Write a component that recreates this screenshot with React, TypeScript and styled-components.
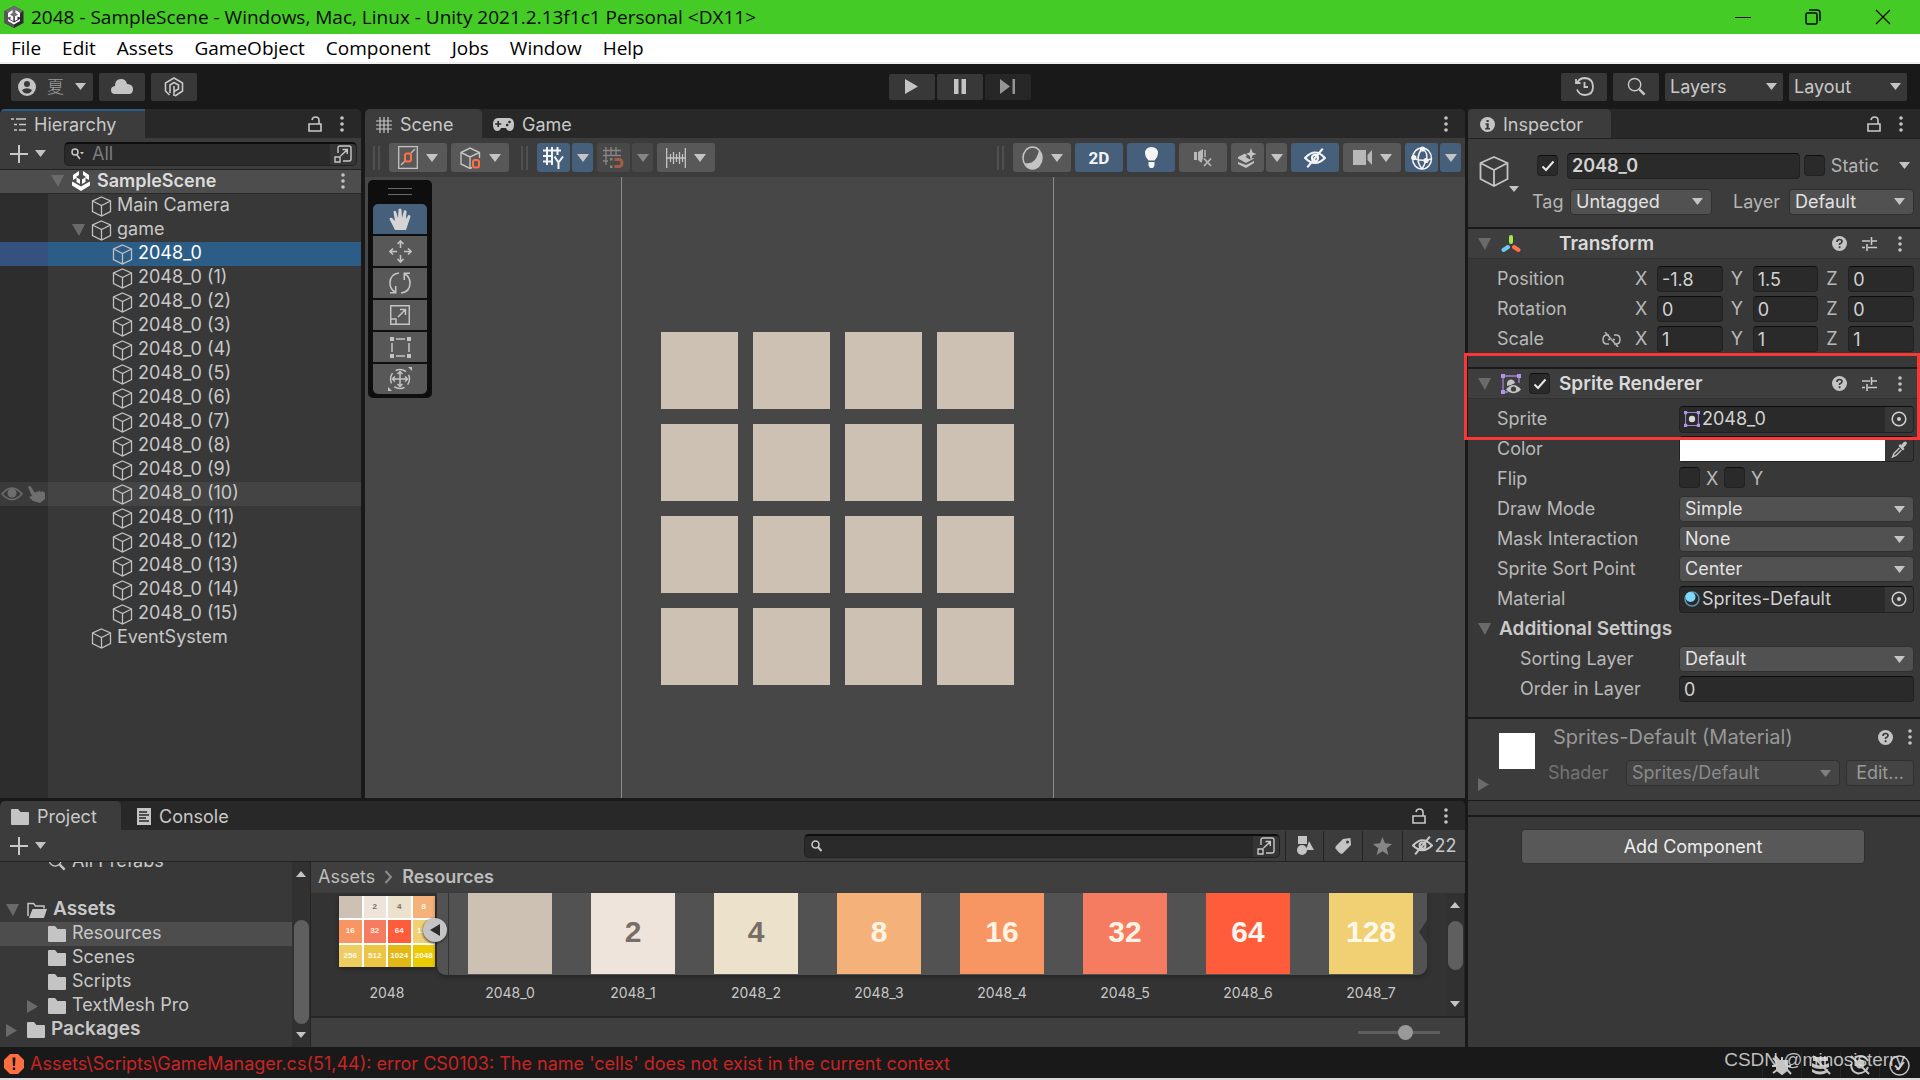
import React from "react";
import styled, { createGlobalStyle, css } from "styled-components";

const c = {
  void: "#191919",
  tabs: "#282828",
  bar: "#3c3c3c",
  panel: "#383838",
  field: "#2a2a2a",
  edge: "#212121",
  text: "#c8c8c8",
  blue: "#46607c",
  select: "#2c5d87",
  orange: "#ff7043",
};

const Global = createGlobalStyle`
  *, *::before, *::after { box-sizing: border-box; }
  body { margin: 0; background: ${c.void}; overflow: hidden; }
  button, input, select {
    font: inherit; color: inherit; margin: 0; padding: 0; border: 0;
    background: none; border-radius: 0; appearance: none; outline: 0;
  }
  svg { display: block; flex: none; }
  ul, h1, h2, p, figure { margin: 0; padding: 0; list-style: none; font: inherit; }
`;

/* ---------- shell ---------- */

const Shell = styled.div`
  display: flex;
  flex-direction: column;
  height: 100vh;
  color: ${c.text};
  font: 18px/24px Inter, "Noto Sans CJK SC", sans-serif;
  background: ${c.void};
  border-bottom: 2px solid #dcdcdc;
`;

const TitleBar = styled.header`
  display: flex;
  align-items: center;
  height: 34px;
  padding: 0 2px 0 4px;
  background: #45cb26;
  color: #0a0a0a;
  font: 19px/28px "Open Sans", "Noto Sans", sans-serif;
`;

const Title = styled.h1`
  flex: 1;
  padding-left: 7px;
`;

const WindowButton = styled.button`
  display: grid;
  place-items: center;
  width: 70px;
  height: 34px;
`;

const MenuBar = styled.nav`
  display: flex;
  gap: 21px;
  height: 30px;
  padding-left: 11px;
  background: #fff;
  border-bottom: 2px solid #f0f0f0;
  color: #000;
  font: 19px/28px "Open Sans", "Noto Sans", sans-serif;
`;

const Toolbar = styled.div`
  display: grid;
  grid-template-columns: 1fr auto 1fr;
  align-items: center;
  height: 45px;
  padding: 0 13px 0 11px;
`;

const Group = styled.div<{ $gap?: number; $end?: boolean }>`
  display: flex;
  gap: ${(p) => p.$gap ?? 6}px;
  justify-content: ${(p) => (p.$end ? "flex-end" : "flex-start")};
`;

const MainButton = styled.button<{ $w: number; $off?: boolean }>`
  display: flex;
  align-items: center;
  justify-content: center;
  gap: 11px;
  width: ${(p) => p.$w}px;
  height: 28px;
  border-radius: 2px;
  background: ${(p) => (p.$off ? "#272727" : c.panel)};
`;

const UserName = styled.span`
  color: #9c9c9c;
  font-size: 17px;
  font-weight: 300;
`;

const PlayGroup = styled(Group)`
  padding-left: 1px;
  button { height: 26px; }
`;

const Body = styled.main`
  flex: 1;
  min-height: 0;
  display: grid;
  grid-template-columns: minmax(0, 1fr) 452px;
  column-gap: 3px;
`;

const LeftSide = styled.div`
  display: flex;
  flex-direction: column;
  gap: 3px;
  min-height: 0;
`;

const Upper = styled.div`
  flex: 1;
  min-height: 0;
  display: grid;
  grid-template-columns: 361px minmax(0, 1fr);
  column-gap: 4px;
`;

const Panel = styled.section`
  display: flex;
  flex-direction: column;
  min-height: 0;
  min-width: 0;
  background: ${c.panel};
  border-radius: 5px 5px 0 0;
  overflow: hidden;
`;

const Tabs = styled.div`
  display: flex;
  align-items: center;
  flex: none;
  height: 29px;
  background: ${c.tabs};
`;

const Tab = styled.button<{ $on?: boolean; $focus?: boolean; $w: number }>`
  display: flex;
  align-items: center;
  gap: 8px;
  width: ${(p) => p.$w}px;
  height: 29px;
  padding: 2px 0 0 11px;
  background: ${(p) => (p.$on ? c.bar : "transparent")};
  border-radius: ${(p) => (p.$focus ? 0 : "5px 5px 0 0")};
  box-shadow: ${(p) => (p.$focus ? `inset 0 2px ${c.select}` : "none")};
`;

const TabEnd = styled.div`
  display: flex;
  align-items: center;
  gap: 18px;
  margin-left: auto;
  padding-right: 17px;
`;

const Plain = styled.button`
  display: grid;
  place-items: center;
`;

/* ---------- hierarchy ---------- */

const ListBar = styled.div<{ $right?: number }>`
  display: flex;
  align-items: center;
  flex: none;
  height: 32px;
  padding: 0 ${(p) => p.$right ?? 0}px 0 10px;
  background: ${c.bar};
  border-bottom: 1px solid #232323;
`;

const AddButton = styled.button`
  display: flex;
  align-items: center;
  gap: 7px;
`;

const Search = styled.label<{ $w?: number }>`
  display: flex;
  align-items: center;
  flex: ${(p) => (p.$w ? `0 0 ${p.$w}px` : "1")};
  gap: 8px;
  height: 24px;
  margin-left: ${(p) => (p.$w ? "auto" : "18px")};
  padding-left: 6px;
  background: ${c.field};
  border: 1px solid ${c.edge};
  border-top: 2px solid #0d0d0d;
  border-radius: 5px;
  overflow: hidden;
  input { flex: 1; min-width: 0; height: 20px; }
  input::placeholder { color: #7c7c7c; opacity: 1; }
`;

const SearchOpen = styled.span`
  display: grid;
  place-items: center;
  width: 26px;
  height: 22px;
  background: #353535;
`;

const SceneRow = styled.div`
  display: flex;
  align-items: center;
  flex: none;
  height: 24px;
  padding: 0 16px 2px 51px;
  background: #4d4d4d;
  border-bottom: 1px solid #2a2a2a;
  color: #dcdcdc;
  font-weight: 600;
  svg + svg { margin-left: 7px; }
  span { flex: 1; padding-left: 6px; }
`;

const Objects = styled.ul`
  flex: 1;
  background: linear-gradient(90deg, #2d2d2d 48px, ${c.panel} 48px);
`;

const ObjectRow = styled.li<{ $on?: boolean; $hover?: boolean }>`
  display: flex;
  align-items: center;
  height: 24px;
  background: ${(p) => (p.$on ? `linear-gradient(90deg, #35517d 48px, ${c.select} 48px)` : p.$hover ? "linear-gradient(90deg, #3a3a3a 48px, #444 48px)" : "none")};
  color: ${(p) => (p.$on ? "#fff" : c.text)};
`;

const Gutter = styled.span`
  display: flex;
  align-items: center;
  gap: 5px;
  width: 48px;
  padding-left: 1px;
`;

const Fold = styled.span<{ $w: number }>`
  display: flex;
  justify-content: flex-end;
  width: ${(p) => p.$w}px;
  padding-right: 6px;
`;

const ObjectName = styled.span`
  padding: 0 0 2px 5px;
`;

/* ---------- scene ---------- */

const SceneBar = styled.div`
  display: flex;
  align-items: center;
  flex: none;
  height: 39px;
  padding: 0 4px 0 8px;
  background: ${c.bar};
  gap: 4px;
`;

const Grip = styled.span<{ $l?: number }>`
  width: 7px;
  height: 24px;
  margin-right: 5px;
  margin-left: ${(p) => p.$l ?? 0}px;
  border: solid #505050;
  border-width: 0 2px;
`;

const Split = styled.div`
  display: flex;
  gap: 2px;
`;

const Tool = styled.button<{ $w: number; $on?: boolean; $off?: boolean }>`
  display: flex;
  align-items: center;
  justify-content: center;
  gap: 8px;
  width: ${(p) => p.$w}px;
  height: 29px;
  border-radius: 3px;
  background: ${(p) => (p.$on ? c.blue : p.$off ? "#484848" : "#585858")};
  color: ${(p) => (p.$on ? "#f4f4f4" : "#c4c4c4")};
  font: 700 17px/24px Roboto, sans-serif;
  svg { opacity: ${(p) => (p.$off ? 0.5 : 1)}; }
`;

const Stretch = styled.span`
  flex: 1;
`;

const Viewport = styled.div`
  position: relative;
  flex: 1;
  padding-left: 256px;
  background: #474747;
`;

const CameraFrame = styled.div`
  display: flex;
  justify-content: center;
  width: 433px;
  height: 100%;
  padding-top: 155px;
  border: solid #8c8c8c;
  border-width: 0 1px;
`;

const Board = styled.div`
  display: grid;
  grid-template-columns: repeat(4, 77px);
  grid-auto-rows: 77px;
  gap: 15px;
  align-content: start;
`;

const Cell = styled.div`
  background: #cdc1b4;
`;

const Palette = styled.div`
  position: absolute;
  left: 3px;
  top: 3px;
  display: flex;
  flex-direction: column;
  gap: 2px;
  width: 64px;
  padding: 8px 5px 4px;
  background: #0e0e0e;
  border-radius: 5px;
  button { width: 54px; height: 30px; border-radius: 0; }
  button:first-of-type { border-radius: 5px 5px 0 0; }
  button:last-of-type { border-radius: 0 0 5px 5px; }
`;

const PaletteGrip = styled.span`
  align-self: center;
  width: 24px;
  height: 7px;
  margin-bottom: 7px;
  border: solid #6a6a6a;
  border-width: 1px 0;
`;

/* ---------- project ---------- */

const ProjectPanel = styled(Panel)`
  flex: none;
  height: 246px;
`;

const Filters = styled.div`
  display: flex;
  margin-left: 5px;
`;

const Filter = styled.button<{ $w: number }>`
  display: flex;
  align-items: center;
  justify-content: center;
  gap: 2px;
  width: ${(p) => p.$w}px;
  height: 30px;
  border-left: 1px solid #242424;
`;

const ProjectBody = styled.div`
  flex: 1;
  min-height: 0;
  display: grid;
  grid-template-columns: 292px 19px minmax(0, 1fr);
`;

const Tree = styled.ul`
  display: flex;
  flex-direction: column;
  justify-content: flex-end;
  overflow: hidden;
  padding-bottom: 5px;
`;

const TreeRow = styled.li<{ $on?: boolean; $bold?: boolean; $depth?: number }>`
  display: flex;
  align-items: center;
  flex: none;
  height: 24px;
  font-size: ${(p) => (p.$bold ? 19 : 18)}px;
  font-weight: ${(p) => (p.$bold ? 600 : 400)};
  background: ${(p) => (p.$on ? "#4d4d4d" : "none")};
  padding-left: ${(p) => (p.$depth ?? 0) * 21}px;
  span:last-child { padding: 0 0 2px 6px; }
`;

const TreeFold = styled.span`
  display: flex;
  width: 27px;
  padding-left: 6px;
`;

const Scroll = styled.div<{ $thumb: number; $lead: number }>`
  display: flex;
  flex-direction: column;
  align-items: center;
  width: 19px;
  padding: 9px 0;
  background: #313131;
  border-right: 1px solid #232323;
  i {
    width: 15px;
    height: ${(p) => p.$thumb}px;
    margin: ${(p) => p.$lead}px 0 auto;
    border-radius: 8px;
    background: #5f5f5f;
  }
`;

const Browser = styled.div`
  display: flex;
  flex-direction: column;
  min-width: 0;
`;

const Crumbs = styled.div`
  display: flex;
  align-items: center;
  gap: 9px;
  height: 31px;
  padding: 0 0 2px 7px;
  background: #3f3f3f;
  a { color: #bdbdbd; text-decoration: none; }
  a:last-child { font-weight: 600; }
`;

const AssetArea = styled.div`
  flex: 1;
  min-height: 0;
  display: flex;
  background: #333;
  border-bottom: 2px solid #262626;
`;

const Texture = styled.figure`
  width: 100px;
  margin-left: 26px;
  text-align: center;
`;

const Caption = styled.figcaption`
  padding-top: 6px;
  font-size: 14px;
  text-align: center;
`;

const TextureHolder = styled.div`
  position: relative;
  height: 82px;
  padding: 3px 2px 0;
`;

const Sheet = styled.div`
  display: grid;
  grid-template-columns: repeat(4, 1fr);
  grid-template-rows: repeat(3, 1fr);
  gap: 2px;
  height: 71px;
  background: #fff;
  box-shadow: 0 2px 4px #222;
`;

const SheetCell = styled.div<{ $bg: string; $fg: string }>`
  display: grid;
  place-items: center;
  background: ${(p) => p.$bg};
  color: ${(p) => p.$fg};
  font: 700 8px/8px "Liberation Sans", Arial, sans-serif;
`;

const Collapse = styled.button`
  position: absolute;
  right: -10px;
  top: 25px;
  z-index: 1;
  display: grid;
  place-items: center;
  width: 24px;
  height: 24px;
  border-radius: 12px;
  background: #c4c4c4;
  box-shadow: 0 1px 3px #222;
`;

const Sprites = styled.div`
  display: grid;
  grid-template-columns: repeat(8, 84px);
  column-gap: 39px;
  align-content: start;
`;

const Strip = styled(Sprites)`
  position: relative;
  padding: 0 14px 1px 31px;
  background: linear-gradient(90deg, #525252 11px, #333 11px, #333 12px, #525252 12px);
  border-radius: 0 0 9px 9px;
  box-shadow: 0 3px 4px #282828;
`;

const StripNotch = styled.svg`
  position: absolute;
  right: 0;
  top: 27px;
`;

const Captions = styled(Sprites)`
  padding-left: 31px;
`;

const SpriteTile = styled.div<{ $bg: string; $fg: string }>`
  display: grid;
  place-items: center;
  height: 81px;
  padding-bottom: 4px;
  background: ${(p) => p.$bg};
  color: ${(p) => p.$fg};
  font: 700 30px/30px "Liberation Sans", Arial, sans-serif;
`;

const ZoomBar = styled.div`
  display: flex;
  justify-content: flex-end;
  align-items: center;
  height: 29px;
  padding-right: 25px;
  background: #3f3f3f;
`;

const ZoomSlider = styled.input`
  width: 82px;
  height: 16px;
  &::-webkit-slider-runnable-track { height: 3px; background: #5e5e5e; }
  &::-webkit-slider-thumb {
    appearance: none; width: 15px; height: 15px; margin-top: -6px;
    border-radius: 8px; background: #999;
  }
`;

/* ---------- inspector ---------- */

const Inspector = styled(Panel)`
  position: relative;
  overflow: visible;
`;

const ObjectHead = styled.div`
  display: grid;
  grid-template-columns: 53px minmax(0, 1fr);
  height: 89px;
  padding: 13px 6px 0 11px;
  background: ${c.bar};
  border-top: 1px solid ${c.edge};
`;

const CubeButton = styled.button`
  display: flex;
  align-items: flex-end;
  align-self: start;
  height: 40px;
`;

const HeadRows = styled.div`
  display: flex;
  flex-direction: column;
  gap: 9px;
`;

const HeadRow = styled.div`
  display: flex;
  align-items: center;
  height: 27px;
  color: #b4b4b4;
`;

const NameRow = styled(HeadRow)`
  padding: 0 4px 0 5px;
  > input { margin: 0 4px 0 9px; }
  label { padding: 0 20px 0 6px; }
`;

const Label = styled.label<{ $w: number }>`
  width: ${(p) => p.$w}px;
`;

const fieldBox = css`
  background: ${c.field};
  border: 1px solid ${c.edge};
  border-top-color: #0d0d0d;
  border-radius: 4px;
`;

const Field = styled.input<{ $bold?: boolean }>`
  ${fieldBox}
  flex: 1;
  width: 100%;
  min-width: 0;
  height: 26px;
  padding-left: 4px;
  color: #d2d2d2;
  font-weight: ${(p) => (p.$bold ? 600 : 400)};
`;

const CheckWrap = styled.span`
  display: grid;
  flex: none;
  width: 21px;
  height: 21px;
  > * { grid-area: 1 / 1; }
  input { ${fieldBox} width: 21px; height: 21px; }
  svg { place-self: center; pointer-events: none; opacity: 0; }
  input:checked + svg { opacity: 1; }
`;

const SelectWrap = styled.span<{ $w?: number; $kind?: "main" | "off" }>`
  display: grid;
  align-items: center;
  flex: ${(p) => (p.$w ? "none" : "1")};
  width: ${(p) => (p.$w ? `${p.$w}px` : "auto")};
  > * { grid-area: 1 / 1; }
  select {
    width: 100%;
    height: ${(p) => (p.$kind === "main" ? 28 : 26)}px;
    padding-left: 5px;
    background: ${(p) => (p.$kind === "main" ? c.panel : p.$kind === "off" ? "#444" : "#515151")};
    border: ${(p) => (p.$kind === "main" ? 0 : 1)}px solid #303030;
    border-radius: ${(p) => (p.$kind === "main" ? 2 : 4)}px;
    color: ${(p) => (p.$kind === "off" ? "#8a8a8a" : p.$kind === "main" ? c.text : "#e2e2e2")};
    opacity: 1;
  }
  svg { justify-self: end; margin-right: ${(p) => (p.$kind === "main" ? 6 : 9)}px; pointer-events: none; }
`;

const CompHead = styled.div`
  display: flex;
  align-items: center;
  height: 32px;
  padding: 0 18px 0 10px;
  background: #3e3e3e;
  border-top: 2px solid #1a1a1a;
  border-bottom: 1px solid #303030;
`;

const CompIcons = styled.span`
  display: flex;
  align-items: center;
  width: 68px;
  padding-left: 10px;
  gap: 8px;
`;

const CompTitle = styled.h2`
  flex: 1;
  color: #dadada;
  font-size: 19px;
  font-weight: 600;
`;

const CompActions = styled.span`
  display: flex;
  align-items: center;
  gap: 15px;
  button:last-child { margin-left: 6px; }
`;

const Props = styled.div`
  display: flex;
  flex-direction: column;
  padding: 5px 6px 13px 29px;
`;

const PropRow = styled.div<{ $indent?: boolean }>`
  display: grid;
  grid-template-columns: 182px minmax(0, 1fr);
  align-items: center;
  height: 30px;
  color: #b8b8b8;
  > :first-child { padding-left: ${(p) => (p.$indent ? 23 : 0)}px; }
`;

const VectorRow = styled.div`
  display: grid;
  grid-template-columns: 97px 25px repeat(3, minmax(0, 1fr));
  column-gap: 8px;
  align-items: center;
  height: 30px;
  color: #b8b8b8;
`;

const Axis = styled.label`
  display: grid;
  grid-template-columns: 22px minmax(0, 1fr);
  align-items: center;
`;

const ObjectField = styled.button`
  ${fieldBox}
  display: flex;
  align-items: center;
  gap: 2px;
  height: 27px;
  padding-left: 4px;
  color: #d2d2d2;
  overflow: hidden;
`;

const Picker = styled.span`
  display: grid;
  place-items: center;
  width: 28px;
  height: 25px;
  margin-left: auto;
  background: #373737;
`;

const ColorField = styled.div`
  ${fieldBox}
  display: flex;
  height: 26px;
  background: #373737;
  input { flex: 1; height: 24px; background: #fff; }
  input::-webkit-color-swatch-wrapper { padding: 0; }
  input::-webkit-color-swatch { border: 0; border-radius: 0; }
  button { width: 28px; }
`;

const Flip = styled.div`
  display: flex;
  gap: 6px;
  label { width: 12px; }
`;

const FoldRow = styled.div`
  display: flex;
  align-items: center;
  gap: 8px;
  height: 30px;
  margin-left: -19px;
  color: #cacaca;
  font-size: 19px;
  font-weight: 600;
`;

const MaterialBox = styled.div`
  display: grid;
  grid-template-columns: 70px minmax(0, 1fr);
  height: 84px;
  padding: 6px 6px 0 10px;
  background: #3c3c3c;
  border-top: 2px solid #1a1a1a;
  border-bottom: 1px solid #1a1a1a;
`;

const MaterialPreview = styled.div`
  display: flex;
  flex-direction: column;
  padding-top: 8px;
  gap: 9px;
  i { width: 36px; height: 36px; margin-left: 21px; background: #fff; }
`;

const MaterialRow = styled.div`
  display: flex;
  align-items: center;
  height: 24px;
  margin-bottom: 12px;
  color: #747474;
`;

const MaterialTitle = styled.h2`
  flex: 1;
  padding-left: 5px;
  color: #989898;
  font-size: 20px;
`;

const MaterialActions = styled.div`
  display: flex;
  gap: 15px;
  padding-right: 2px;
  color: ${c.text};
`;

const EditButton = styled.button`
  width: 68px;
  height: 26px;
  margin-left: 6px;
  background: #444;
  border: 1px solid #303030;
  border-radius: 4px;
  color: #999;
`;

const AddArea = styled.div`
  display: flex;
  justify-content: center;
  margin-top: 14px;
  padding: 12px 2px 12px 0;
  border-top: 2px solid #1a1a1a;
`;

const AddComponent = styled.button`
  width: 344px;
  height: 35px;
  background: #585858;
  border: 1px solid #303030;
  border-radius: 4px;
  color: #eee;
`;

const Callout = styled.div`
  position: absolute;
  left: -4px;
  right: 0;
  top: 244px;
  height: 87px;
  border: 3px solid #fa3737;
  pointer-events: none;
`;

/* ---------- status ---------- */

const Status = styled.footer`
  position: relative;
  display: flex;
  align-items: center;
  gap: 6px;
  height: 31px;
  padding: 2px 2px 0 4px;
  color: #c92424;
`;

const StatusIcons = styled.div`
  display: flex;
  margin-left: auto;
  padding-top: 3px;
  button { display: grid; place-items: center; width: 39px; height: 26px; border-left: 1px solid #262626; }
`;

const Watermark = styled.span`
  position: absolute;
  right: 15px;
  top: 1px;
  color: rgba(222, 222, 222, 0.85);
  font: 19px/24px "Liberation Sans", Arial, sans-serif;
`;

/* ---------- icons ---------- */

const S = ({ s = 20, h, vb, children, ...r }: any) => (
  <svg width={s} height={h ?? s} viewBox={vb ?? `0 0 ${s} ${h ?? s}`} fill="none" stroke="currentColor" strokeWidth={1.5} aria-hidden {...r}>
    {children}
  </svg>
);

const Tri = ({ d = "down", w = 11, fill = "#c4c4c4" }: { d?: string; w?: number; fill?: string }) => {
  const h = Math.ceil(w * 0.6);
  if (d === "down") return <svg width={w} height={h} viewBox="0 0 10 6" preserveAspectRatio="none"><path d="M0 0H10L5 6Z" fill={fill} /></svg>;
  if (d === "up") return <svg width={w} height={h} viewBox="0 0 10 6" preserveAspectRatio="none"><path d="M0 6H10L5 0Z" fill={fill} /></svg>;
  return <svg width={w} height={13} viewBox="0 0 10 12" preserveAspectRatio="none"><path d="M0 0V12L10 6Z" fill={fill} /></svg>;
};

const FoldDown = () => <svg width="13" height="12" viewBox="0 0 13 12"><path d="M0 0H13L7 12Z" fill="#6a6a6a" /></svg>;

const Cube = ({ s = 21 }: { s?: number }) => (
  <S s={s} vb="0 0 21 21" strokeWidth={1.3} stroke="#c0c0c0">
    <path d="M10.5 1L19.5 5V15.5L10.5 20L1.5 15.5V5Z M1.5 5L10.5 9.5L19.5 5 M10.5 9.5V20" />
  </S>
);

const Dots = () => <S s={4} h={16} stroke="none" fill="#c4c4c4"><circle cx="2" cy="2" r="1.8" /><circle cx="2" cy="8" r="1.8" /><circle cx="2" cy="14" r="1.8" /></S>;

const Lock = () => <S s={14} h={16} strokeWidth={1.6}><path d="M1 8H13V15H1Z M11 8V4.5Q11 1 7.5 1Q4.5 1 4 4" /></S>;

const UnityMark = () => (
  <S s={20} stroke="none" fill="#fff">
    <path d="M8 0V4L5 6L9 8.500V13L5.500 11V7L2 9V4Z M12 0V4L15 6L11 8.500V13L14.500 11V7L18 9V4Z M1 10.500L4 12L10 15.500L16 12L19 10.500V14.500L10 20L1 14.500Z" />
  </S>
);

const AppLogo = () => (
  <S s={20} h={22} stroke="none">
    <path d="M10 0L19.500 5V17L10 22L0.500 17V5Z" fill="#2a2a30" />
    <path d="M10 0L19.500 5L10 11L0.500 5Z" fill="#6d6d72" />
    <path d="M0.500 5L10 11V22L0.500 17Z" fill="#55555a" />
    <path d="M8.500 4V7L6 8.500L9.200 10.500V15L6.500 13.500V10.500L4 11.500V7Z M11.500 4V7L14 8.500L10.800 10.500V15L13.500 13.500V10.500L16 11.500V7Z M4 13L10 16.500L16 13V15L10 18.500L4 15Z" fill="#fff" />
  </S>
);

const Folder = () => <S s={18} h={16} stroke="none" fill="#c4c4c4"><path d="M0 1Q0 0 1 0H7L9.500 3H17Q18 3 18 4V15Q18 16 17 16H1Q0 16 0 15Z" /></S>;

const FolderOpen = () => <S s={20} h={16} stroke="none" fill="#c4c4c4"><path d="M5.500 7H20L17 16H2Z" /><path d="M1 14V1.500H6.500L8.500 4H17V6.500" fill="none" stroke="#c4c4c4" strokeWidth="1.500" /></S>;

const Magnifier = ({ s = 20 }: { s?: number }) => <S s={s} vb="0 0 20 20"><circle cx="8" cy="8" r="6.500" /><path d="M13 13L18.500 18.500" strokeWidth="2.600" /></S>;

const Plus = () => <S s={18} strokeWidth={2}><path d="M9 0V18M0 9H18" /></S>;

const OpenIn = () => <S s={18} strokeWidth={1.4}><path d="M4 8V3Q4 1 6 1H15Q17 1 17 3V14Q17 16 15 16H9 M1 12H6V17H1Z M6.500 11L13 5 M8.500 4.500H13.300V9" /></S>;

const Grid = ({ s = 16 }: { s?: number }) => <S s={s} vb="0 0 16 16"><path d="M4 0V16M8 0V16M12 0V16M0 4H16M0 8H16M0 12H16" strokeWidth="1.200" /></S>;

const Help = () => <S s={15} stroke="none"><circle cx="7.500" cy="7.500" r="7.500" fill="#c4c4c4" /><path d="M5 6Q5 3.500 7.500 3.500Q10 3.500 10 5.500Q10 7 7.600 8V9" fill="none" stroke="#383838" strokeWidth="1.700" /><path d="M6.700 10.300H8.500V12.200H6.700Z" fill="#383838" /></S>;

const Sliders = () => <S s={15} h={14} strokeWidth={1.6}><path d="M0 4H8M10 4H15M9.500 0V8M0 10.500H3M6 10.500H15M5 7V14" /></S>;

const EyeOff = ({ s = 20 }: { s?: number }) => <S s={s} vb="0 0 20 20" strokeWidth={2}><path d="M1 10Q10 0 19 10Q10 19 1 10Z" /><circle cx="10" cy="10" r="2.800" /><path d="M3 18.500L17 1.500" /></S>;

const Target = () => <S s={16} strokeWidth={1.5}><circle cx="8" cy="8" r="6.800" /><circle cx="8" cy="8" r="2" fill="currentColor" stroke="none" /></S>;

const SpriteIcon = ({ s = 16, eye }: { s?: number; eye?: boolean }) => (
  <S s={s} vb="0 0 20 20" stroke="#a184d8" strokeWidth={1.3}>
    <path d={eye ? "M18 9V2H2V18H7" : "M2 2H18V18H2Z"} />
    <path d="M0 0H4V4H0ZM16 0H20V4H16ZM0 16H4V20H0Z" fill="#b195e6" stroke="none" />
    {eye ? (
      <g stroke="none" fill="#c4c4c4">
        <path d="M6 12V9Q7 5.500 10 5.500Q13 5.500 14 9L10 11Z" />
        <path d="M5 15.500Q12.500 6.500 20 15.500Q12.500 23 5 15.500Z" />
        <circle cx="12.500" cy="15" r="2.600" fill="#3e3e3e" />
      </g>
    ) : (
      <g stroke="none"><path d="M16 16H20V20H16Z" fill="#b195e6" /><circle cx="10" cy="10" r="4" fill="#d8d8d8" /></g>
    )}
  </S>
);

const CheckMark = () => <S s={14} h={12} stroke="#e8e8e8" strokeWidth={2}><path d="M1.500 6.500L5 10L12.500 1.500" /></S>;

/* ---------- small parts ---------- */

const Check = ({ id, on, label }: { id: string; on?: boolean; label?: string }) => (
  <CheckWrap>
    <input id={id} type="checkbox" defaultChecked={on} aria-label={label} />
    <CheckMark />
  </CheckWrap>
);

const Select = ({ id, value, w, kind, label }: { id: string; value: string; w?: number; kind?: "main" | "off"; label?: string }) => (
  <SelectWrap $w={w} $kind={kind}>
    <select id={id} defaultValue={value} aria-label={label} disabled={kind === "off"}><option>{value}</option></select>
    <Tri fill={kind === "off" ? "#808080" : "#c4c4c4"} />
  </SelectWrap>
);

const ScrollBar = ({ thumb, lead }: { thumb: number; lead: number }) => (
  <Scroll $thumb={thumb} $lead={lead}><Tri d="up" w={10} /><i /><Tri w={10} /></Scroll>
);

const tiles = [
  { n: "", bg: "#cdc1b4", fg: "#776e65" },
  { n: "2", bg: "#eee4dc", fg: "#776e65" },
  { n: "4", bg: "#ece1ca", fg: "#776e65" },
  { n: "8", bg: "#f4b27a", fg: "#fff3e4" },
  { n: "16", bg: "#f89663", fg: "#fff3e4" },
  { n: "32", bg: "#f57c60", fg: "#fff3e4" },
  { n: "64", bg: "#ff5c3c", fg: "#fff6ee" },
  { n: "128", bg: "#f0d072", fg: "#fff9ec" },
  { n: "256", bg: "#edcc61", fg: "#fff9ec" },
  { n: "512", bg: "#edc545", fg: "#fff9ec" },
  { n: "1024", bg: "#e2b914", fg: "#fff9ec" },
  { n: "2048", bg: "#ecca02", fg: "#fff9ec" },
];

const children = Array.from({ length: 16 }, (_, i) => (i ? `2048_0 (${i})` : "2048_0"));

const vectors: [string, string[]][] = [
  ["Position", ["-1.8", "1.5", "0"]],
  ["Rotation", ["0", "0", "0"]],
  ["Scale", ["1", "1", "1"]],
];

const Actions = () => (
  <CompActions>
    <Plain aria-label="Help"><Help /></Plain>
    <Plain aria-label="Presets"><Sliders /></Plain>
    <Plain aria-label="More"><Dots /></Plain>
  </CompActions>
);

/* ---------- panels ---------- */

function HierarchyPanel() {
  return (
    <Panel>
      <Tabs>
        <Tab $on $focus $w={145}>
          <S s={15} h={16} strokeWidth={1.6}><path d="M0 2H3M5 2H15M3 7.500H6M8 7.500H15M3 13H6M8 13H15" /></S>
          Hierarchy
        </Tab>
        <TabEnd><Plain aria-label="Lock"><Lock /></Plain><Plain aria-label="More"><Dots /></Plain></TabEnd>
      </Tabs>
      <ListBar $right={4}>
        <AddButton aria-label="Create"><Plus /><Tri /></AddButton>
        <Search>
          <S s={13} h={14} strokeWidth={1.5}><circle cx="4" cy="5" r="3" /><path d="M6 8L9 12" /><path d="M9 5H13L11 7.500Z" fill="currentColor" stroke="none" /></S>
          <input aria-label="Search hierarchy" placeholder="All" />
          <SearchOpen><OpenIn /></SearchOpen>
        </Search>
      </ListBar>
      <SceneRow><FoldDown /><UnityMark /><span>SampleScene</span><Dots /></SceneRow>
      <Objects>
        <ObjectRow><Gutter /><Fold $w={43} /><Cube /><ObjectName>Main Camera</ObjectName></ObjectRow>
        <ObjectRow><Gutter /><Fold $w={43}><FoldDown /></Fold><Cube /><ObjectName>game</ObjectName></ObjectRow>
        {children.map((name, i) => (
          <ObjectRow key={name} $on={i === 0} $hover={i === 10}>
            <Gutter>
              {i === 10 && (
                <>
                  <S s={22} h={14} stroke="#6e6e6e"><path d="M1 7Q11 -5 21 7Q11 18 1 7Z" /><circle cx="11" cy="6" r="4.500" fill="#6e6e6e" stroke="none" /></S>
                  <S s={17} h={17} stroke="none" fill="#6e6e6e"><path d="M0 1Q2 -1 3.500 1.500L7 7L8 5.500L10 6L11 4.500L13 6L14.500 5L17 7V13L12 17L5 15L1 11L4 10Z" /></S>
                </>
              )}
            </Gutter>
            <Fold $w={64} /><Cube /><ObjectName>{name}</ObjectName>
          </ObjectRow>
        ))}
        <ObjectRow><Gutter /><Fold $w={43} /><Cube /><ObjectName>EventSystem</ObjectName></ObjectRow>
      </Objects>
    </Panel>
  );
}

function ScenePanel() {
  return (
    <Panel>
      <Tabs>
        <Tab $on $w={117}><Grid />Scene</Tab>
        <Tab $w={110}>
          <S s={21} h={13} stroke="none" fill="#c4c4c4">
            <path d="M5 0H16Q21 0 21 6.500Q21 13 17 13Q14 13 13 10H8Q7 13 4 13Q0 13 0 6.500Q0 0 5 0Z" />
            <path d="M5.200 3V9M2.200 6H8.200" stroke="#282828" strokeWidth="1.600" /><circle cx="16.500" cy="4" r="1.300" fill="#282828" /><circle cx="14.200" cy="7" r="1.300" fill="#282828" />
          </S>
          Game
        </Tab>
        <TabEnd><Plain aria-label="More"><Dots /></Plain></TabEnd>
      </Tabs>
      <SceneBar>
        <Grip />
        <Tool $w={58} aria-label="Pivot">
          <S s={20} h={23}><path d="M0.700 0.700H19.300V22.300H0.700Z" strokeWidth="1.300" /><path d="M3 19L7 15M13 7L17 3" strokeWidth="1.300" /><rect x="7" y="7.500" width="6" height="8" rx="2" stroke={c.orange} strokeWidth="2" /></S><Tri w={12} />
        </Tool>
        <Tool $w={58} aria-label="Orientation">
          <S s={21} h={22} strokeWidth={1.4}><path d="M12 20.500L10 21.500L1 17V5.500L10 1L19.500 5.500V11M1 5.500L10 10L19.500 5.500M10 10V21" /><rect x="13" y="13" width="6" height="7.500" rx="2" stroke={c.orange} strokeWidth="2" /></S><Tri w={12} />
        </Tool>
        <Grip $l={8} />
        <Split>
          <Tool $w={33} $on aria-label="Grid">
            <S s={21} h={22} strokeWidth={2}><path d="M4 0V18M9 0V18M14.500 0V8M0 3.500H18M0 9H10M0 14.500H9M11.500 9.500L15.500 15.500L20 9.500M15.500 15V22" /></S>
          </Tool>
          <Tool $w={21} $on aria-label="Grid options"><Tri w={12} /></Tool>
        </Split>
        <Split>
          <Tool $w={33} $off aria-label="Snap">
            <S s={21} h={22}><path d="M3 0V18M8 0V9M13 0V9M0 3.500H18M0 8.500H18M0 14H5" strokeWidth="1.300" /><path d="M7 11H9.500V13.500H7ZM7 18.500H9.500V21H7Z" fill="currentColor" stroke="none" /><path d="M11.500 12.500H15.500Q19 12.500 19 16Q19 19.500 15.500 19.500H11.500" stroke={c.orange} strokeWidth="3" /></S>
          </Tool>
          <Tool $w={21} $off aria-label="Snap options"><Tri w={12} /></Tool>
        </Split>
        <Tool $w={58} aria-label="Increment">
          <S s={20} strokeWidth={1.3}><path d="M0.700 0V20M19.300 0V20M0 10H20M4.500 6V14M7.500 4V16M10.500 6V14M13.500 4V16M16.500 6V14" /></S><Tri w={12} />
        </Tool>
        <Stretch />
        <Grip />
        <Tool $w={58} aria-label="Shading">
          <S s={21} h={24}><ellipse cx="10.500" cy="12" rx="9.500" ry="11" strokeWidth="1.500" /><path d="M3 17Q14 19 17 4Q21 9 19.500 15Q17 23 10.500 23Q5 22.500 3 17Z" fill="currentColor" stroke="none" /></S><Tri w={12} />
        </Tool>
        <Tool $w={48} $on>2D</Tool>
        <Tool $w={48} $on aria-label="Lighting"><S s={13} h={21} stroke="none" fill="#f4f4f4"><path d="M3.500 13.500Q0 10 0 6.500Q0 0 6.500 0Q13 0 13 6.500Q13 10 9.500 13.500ZM3.500 15H9.500V18.500L8 21H5L3.500 18.500Z" /></S></Tool>
        <Tool $w={48} aria-label="Audio"><S s={18} h={18} stroke="none" fill="#b8b8b8"><path d="M0 3H3V11H0ZM4 3L9 0V9L7.500 14L4 11Z" /><path d="M11 1V8" stroke="#b8b8b8" strokeWidth="1.500" /><path d="M10 9.500L17 17M17 9.500L10 17" stroke="#b8b8b8" strokeWidth="1.800" /></S></Tool>
        <Split>
          <Tool $w={33} aria-label="Effects"><S s={19} h={20} stroke="none" fill="currentColor"><path d="M0 9L7 5.500L9 8L7.500 9L12 11.500L15 10L16 10.500L8 15L0 10.500ZM0 14L8 17L16 13V15L8 20L0 16ZM13 0L14.500 4.500L18.500 6L14.500 7.500L13 12L11.500 7.500L8 6L11.500 4.500Z" /></S></Tool>
          <Tool $w={21} aria-label="Effects options"><Tri w={12} /></Tool>
        </Split>
        <Tool $w={48} $on aria-label="Visibility"><EyeOff s={22} /></Tool>
        <Tool $w={58} aria-label="Camera"><S s={19} h={15} stroke="none" fill="#b8b8b8"><path d="M0 0H13V15H0ZM14.500 5L19 0V15L14.500 10Z" /></S><Tri w={12} /></Tool>
        <Split>
          <Tool $w={33} $on aria-label="Gizmos">
            <S s={22} h={24}><ellipse cx="11" cy="12.500" rx="9.500" ry="10.500" /><path d="M11 2.500Q3 13 11 23M12 3Q18 8 15 14.500Q13 20 11 23M2 11.500Q8 16 20.500 13" /><circle cx="11.500" cy="3" r="2.600" fill="#f4f4f4" stroke="none" /><circle cx="2.800" cy="11.500" r="2.600" fill="#f4f4f4" stroke="none" /><circle cx="15" cy="14.500" r="2.600" fill="#f4f4f4" stroke="none" /></S>
          </Tool>
          <Tool $w={21} $on aria-label="Gizmo options"><Tri w={12} /></Tool>
        </Split>
      </SceneBar>
      <Viewport>
        <CameraFrame>
          <Board>{Array.from({ length: 16 }, (_, i) => <Cell key={i} />)}</Board>
        </CameraFrame>
        <Palette>
          <PaletteGrip />
          <Tool $w={54} $on aria-label="Hand"><S s={22} h={23} stroke="none" fill="#d4d4d4"><path d="M6 22L0.500 11Q1 9 3 10L6 13L4.500 4Q5 2 7 3.500L9 10L9.500 1.500Q11 -0.500 12.500 1.500L13 10L15 2.500Q17 1.500 17.500 3.500L17 11L19.500 7Q21.500 6.500 21.500 8.500L17 22Z" /></S></Tool>
          <Tool $w={54} aria-label="Move"><S s={23} strokeWidth={1.6}><path d="M11.500 8V1M8.500 4L11.500 1L14.500 4M11.500 15V22M8.500 19L11.500 22L14.500 19M8 11.500H1M4 8.500L1 11.500L4 14.500M15 11.500H22M19 8.500L22 11.500L19 14.500" /></S></Tool>
          <Tool $w={54} aria-label="Rotate"><S s={22} strokeWidth={1.6}><path d="M10 1Q1 2 1 11Q1 17 6 20M1 20.700H6.700V14M12 21Q21 20 21 11Q21 5 16 2M21 1.300H15.300V8" /></S></Tool>
          <Tool $w={54} aria-label="Scale"><S s={20}><path d="M0.700 0.700H19.300V19.300H0.700ZM0.700 14H6V19.300M8 12L15.500 4.500M10 4.500H15.500V10" /></S></Tool>
          <Tool $w={54} aria-label="Rect"><S s={21}><path d="M6 2H15M6 19H15M2 6V15M19 6V15" /><path d="M0 0H4V4H0ZM17 0H21V4H17ZM0 17H4V21H0ZM17 17H21V21H17Z" fill="currentColor" stroke="none" /></S></Tool>
          <Tool $w={54} aria-label="Transform"><S s={24}><circle cx="12" cy="12" r="9.500" strokeDasharray="11 4" strokeDashoffset="5" /><path d="M12 5V19M5 12H19M9.500 7L12 4.500L14.500 7M9.500 17L12 19.500L14.500 17M7 9.500L4.500 12L7 14.500M17 9.500L19.500 12L17 14.500" /><path d="M20 0H24V4ZM0 20V24H4Z" fill="currentColor" stroke="none" /></S></Tool>
        </Palette>
      </Viewport>
    </Panel>
  );
}

function Project() {
  return (
    <ProjectPanel>
      <Tabs>
        <Tab $on $w={121}><Folder />Project</Tab>
        <Tab $w={120}>
          <S s={19} h={17} stroke="none"><path d="M5 0H19V17H5Z" fill="#c4c4c4" /><path d="M7 4H15M7 7H17M7 10H14M7 13H17" stroke="#282828" strokeWidth="1.500" /></S>
          Console
        </Tab>
        <TabEnd><Plain aria-label="Lock"><Lock /></Plain><Plain aria-label="More"><Dots /></Plain></TabEnd>
      </Tabs>
      <ListBar>
        <AddButton aria-label="Create"><Plus /><Tri /></AddButton>
        <Search $w={476}>
          <S s={11} h={12} strokeWidth={1.6}><circle cx="4.500" cy="4.500" r="3.500" /><path d="M7 7L10.500 11" strokeWidth="2" /></S>
          <input aria-label="Search project" />
          <SearchOpen><OpenIn /></SearchOpen>
        </Search>
        <Filters>
          <Filter $w={38} aria-label="Search by type"><S s={18} h={19} stroke="none" fill="#c4c4c4"><path d="M2 0H11V8H2ZM13 5L18 14H10Z" /><circle cx="6" cy="14" r="5" /></S></Filter>
          <Filter $w={39} aria-label="Search by label"><S s={17} h={16} stroke="none"><path d="M8 1L15.500 0L16 7L7 16Q5 16 0.500 10.500Q0 9 1 8Z" fill="#c4c4c4" /><circle cx="12.500" cy="4" r="1.500" fill="#3c3c3c" /></S></Filter>
          <Filter $w={40} aria-label="Favorites"><S s={19} h={18} stroke="none"><path d="M9.500 0L12 6.300L19 6.900L13.700 11.300L15.400 18L9.500 14.300L3.600 18L5.300 11.300L0 6.900L7 6.300Z" fill="#858585" /></S></Filter>
          <Filter $w={63}><EyeOff s={21} />22</Filter>
        </Filters>
      </ListBar>
      <ProjectBody>
        <Tree>
          <TreeRow $depth={1}><TreeFold /><Magnifier s={18} /><span>All Prefabs</span></TreeRow>
          <TreeRow aria-hidden />
          <TreeRow $bold><TreeFold><FoldDown /></TreeFold><FolderOpen /><span>Assets</span></TreeRow>
          <TreeRow $depth={1} $on><TreeFold /><Folder /><span>Resources</span></TreeRow>
          <TreeRow $depth={1}><TreeFold /><Folder /><span>Scenes</span></TreeRow>
          <TreeRow $depth={1}><TreeFold /><Folder /><span>Scripts</span></TreeRow>
          <TreeRow $depth={1}><TreeFold><Tri d="right" fill="#6a6a6a" /></TreeFold><Folder /><span>TextMesh Pro</span></TreeRow>
          <TreeRow $bold><TreeFold><Tri d="right" fill="#6a6a6a" /></TreeFold><Folder /><span>Packages</span></TreeRow>
        </Tree>
        <ScrollBar thumb={104} lead={43} />
        <Browser>
          <Crumbs>
            <a href="#assets">Assets</a>
            <S s={9} h={14} strokeWidth={2} stroke="#8c8c8c"><path d="M1.500 1L7 7L1.500 13" /></S>
            <a href="#resources">Resources</a>
          </Crumbs>
          <AssetArea>
            <Texture>
              <TextureHolder>
                <Sheet>{tiles.map((t) => <SheetCell key={t.n} $bg={t.bg} $fg={t.fg}>{t.n}</SheetCell>)}</Sheet>
                <Collapse aria-label="Collapse"><svg width="10" height="12" viewBox="0 0 10 12"><path d="M10 0V12L0 6Z" fill="#2c2c2c" /></svg></Collapse>
              </TextureHolder>
              <Caption>2048</Caption>
            </Texture>
            <div>
              <Strip>
                {tiles.slice(0, 8).map((t) => <SpriteTile key={t.n} $bg={t.bg} $fg={t.fg}>{t.n}</SpriteTile>)}
                <StripNotch width="8" height="24" viewBox="0 0 8 24"><path d="M8 0V24L0 12Z" fill="#333" /></StripNotch>
              </Strip>
              <Captions>{tiles.slice(0, 8).map((t, i) => <Caption as="p" key={i}>{`2048_${i}`}</Caption>)}</Captions>
            </div>
            <Stretch />
            <ScrollBar thumb={49} lead={13} />
          </AssetArea>
          <ZoomBar><ZoomSlider type="range" min={0} max={100} defaultValue={60} aria-label="Icon size" /></ZoomBar>
        </Browser>
      </ProjectBody>
    </ProjectPanel>
  );
}

function InspectorPanel() {
  return (
    <Inspector>
      <Tabs>
        <Tab $on $w={143}>
          <S s={16} h={15} stroke="none"><circle cx="8.500" cy="7.500" r="7.500" fill="#c4c4c4" /><path d="M7.500 3H9.700V5H7.500ZM6.500 6.300H9.700V11H11V12.500H6.200V11H7.500V7.700H6.500Z" fill="#383838" /></S>
          Inspector
        </Tab>
        <TabEnd><Plain aria-label="Lock"><Lock /></Plain><Plain aria-label="More"><Dots /></Plain></TabEnd>
      </Tabs>
      <ObjectHead>
        <CubeButton aria-label="Icon">
          <S s={30} h={37} stroke="#c4c4c4" strokeWidth={1.8}><path d="M15 2L28.500 8V24L15 31L1.500 24V8ZM1.500 8L15 15L28.500 8M15 15V31" /></S>
          <Tri w={10} />
        </CubeButton>
        <HeadRows>
          <NameRow>
            <Check id="active" on label="Active" />
            <Field $bold defaultValue="2048_0" aria-label="Name" />
            <Check id="static" />
            <label htmlFor="static">Static</label>
            <Plain aria-label="Static flags"><Tri /></Plain>
          </NameRow>
          <HeadRow>
            <Label $w={38} htmlFor="tag">Tag</Label>
            <Select id="tag" value="Untagged" w={142} />
            <Stretch />
            <Label $w={56} htmlFor="layer">Layer</Label>
            <Select id="layer" value="Default" w={125} />
          </HeadRow>
        </HeadRows>
      </ObjectHead>

      <CompHead>
        <FoldDown />
        <CompIcons>
          <S s={20} h={18} strokeWidth={4} strokeLinecap="round"><path d="M10 2V7" stroke="#a4e84a" /><path d="M7 12L2.500 15" stroke="#6fc8f5" /><path d="M13 12L17.500 15" stroke={c.orange} /></S>
        </CompIcons>
        <CompTitle>Transform</CompTitle>
        <Actions />
      </CompHead>
      <Props>
        {vectors.map(([name, values]) => (
          <VectorRow key={name}>
            <span>{name}</span>
            <span>
              {name === "Scale" && <S s={19} h={15}><path d="M7 3H5Q1 3 1 7.500Q1 12 5 12H7M12 3H14Q18 3 18 7.500Q18 12 14 12H12M6 7.500H8M11 7.500H13M3 0L16 15" /></S>}
            </span>
            {values.map((v, i) => <Axis key={i}>{"XYZ"[i]}<Field defaultValue={v} /></Axis>)}
          </VectorRow>
        ))}
      </Props>

      <CompHead>
        <FoldDown />
        <CompIcons><SpriteIcon s={20} eye /><Check id="enabled" on label="Enabled" /></CompIcons>
        <CompTitle>Sprite Renderer</CompTitle>
        <Actions />
      </CompHead>
      <Props>
        <PropRow><span>Sprite</span><ObjectField><SpriteIcon />2048_0<Picker><Target /></Picker></ObjectField></PropRow>
        <PropRow>
          <label htmlFor="color">Color</label>
          <ColorField>
            <input id="color" type="color" defaultValue="#ffffff" />
            <Plain aria-label="Pick color"><S s={16} h={17} stroke="none" fill="#c4c4c4"><path d="M9 3L10.500 4Q13 -1 15.500 1Q17 3.500 12.500 6.500L13.500 8L12 9.500L7.500 5Z" /><path d="M8.500 7L3 12.500L1.500 16L5 14.500L10.500 9" stroke="#c4c4c4" strokeWidth="1.400" fill="none" /></S></Plain>
          </ColorField>
        </PropRow>
        <PropRow>
          <span>Flip</span>
          <Flip><Check id="flipx" /><label htmlFor="flipx">X</label><Check id="flipy" /><label htmlFor="flipy">Y</label></Flip>
        </PropRow>
        <PropRow><label htmlFor="draw">Draw Mode</label><Select id="draw" value="Simple" /></PropRow>
        <PropRow><label htmlFor="mask">Mask Interaction</label><Select id="mask" value="None" /></PropRow>
        <PropRow><label htmlFor="sort">Sprite Sort Point</label><Select id="sort" value="Center" /></PropRow>
        <PropRow>
          <span>Material</span>
          <ObjectField>
            <S s={16}><circle cx="8" cy="8" r="7" stroke="#5a93ac" strokeWidth="1.500" /><circle cx="6.500" cy="6" r="5" fill="#80d8ff" stroke="none" /></S>
            Sprites-Default<Picker><Target /></Picker>
          </ObjectField>
        </PropRow>
        <FoldRow><FoldDown />Additional Settings</FoldRow>
        <PropRow $indent><label htmlFor="layerSort">Sorting Layer</label><Select id="layerSort" value="Default" /></PropRow>
        <PropRow $indent><label htmlFor="order">Order in Layer</label><Field id="order" defaultValue="0" /></PropRow>
      </Props>

      <MaterialBox>
        <MaterialPreview><i /><Tri d="right" fill="#6a6a6a" /></MaterialPreview>
        <div>
          <MaterialRow>
            <MaterialTitle>Sprites-Default (Material)</MaterialTitle>
            <MaterialActions>
              <Plain aria-label="Help"><Help /></Plain><Plain aria-label="More"><Dots /></Plain>
            </MaterialActions>
          </MaterialRow>
          <MaterialRow>
            <Label $w={78} htmlFor="shader">Shader</Label>
            <Select id="shader" value="Sprites/Default" kind="off" />
            <EditButton>Edit...</EditButton>
          </MaterialRow>
        </div>
      </MaterialBox>
      <AddArea><AddComponent>Add Component</AddComponent></AddArea>
      <Callout />
    </Inspector>
  );
}

export default function App() {
  return (
    <Shell>
      <Global />
      <TitleBar>
        <AppLogo />
        <Title>{"2048 - SampleScene - Windows, Mac, Linux - Unity 2021.2.13f1c1 Personal <DX11>"}</Title>
        <WindowButton aria-label="Minimize"><S s={16} strokeWidth={1}><path d="M0 8.500H16" /></S></WindowButton>
        <WindowButton aria-label="Restore"><S s={16}><rect x="1" y="4" width="11" height="11" rx="1.500" /><path d="M4 1H12Q15 1 15 4V12" /></S></WindowButton>
        <WindowButton aria-label="Close"><S s={16} strokeWidth={1.3}><path d="M1 1L15 15M15 1L1 15" /></S></WindowButton>
      </TitleBar>
      <MenuBar>
        {["File", "Edit", "Assets", "GameObject", "Component", "Jobs", "Window", "Help"].map((m) => <button key={m}>{m}</button>)}
      </MenuBar>
      <Toolbar>
        <Group>
          <MainButton $w={82}>
            <S s={18} stroke="none"><circle cx="9" cy="9" r="9" fill="#c4c4c4" /><circle cx="9" cy="6" r="3" fill="#383838" /><path d="M4 12Q9 8.500 14 12Q12.500 15.500 9 15.500Q5.500 15.500 4 12Z" fill="#383838" /></S>
            <UserName>夏</UserName>
            <Tri />
          </MainButton>
          <MainButton $w={46} aria-label="Cloud"><S s={22} h={15} stroke="none" fill="#c4c4c4"><path d="M4 15Q0 15 0 11Q0 7.500 4 7Q4 0 10 0Q15 0 16 5Q22 5.500 22 10Q22 15 18 15Z" /></S></MainButton>
          <MainButton $w={46} aria-label="Version control"><S s={20} strokeWidth={1.6}><path d="M5.500 18L1.500 14V6L10 1L18.500 6V14L11 19M6 16V8L10 5.500L14.500 8V12L10 14.500M10 9V19" /></S></MainButton>
        </Group>
        <PlayGroup $gap={2}>
          <MainButton $w={46} aria-label="Play"><S s={13} h={15} stroke="none"><path d="M0 0L13 7.500L0 15Z" fill="#c4c4c4" /></S></MainButton>
          <MainButton $w={46} aria-label="Pause"><S s={12} h={15} stroke="none"><path d="M0 0H4.500V15H0ZM7.500 0H12V15H7.500Z" fill="#c4c4c4" /></S></MainButton>
          <MainButton $w={46} $off aria-label="Step"><S s={15} h={15} stroke="none"><path d="M0 0L10 7.500L0 15ZM12.500 0H15V15H12.500Z" fill="#959595" /></S></MainButton>
        </PlayGroup>
        <Group $end>
          <MainButton $w={46} aria-label="History"><S s={19} strokeWidth={1.8}><path d="M2.500 5Q5 1 10 1Q18 1.500 18 9.500Q18 18 10 18Q4 18 2 12.500M1 2V6H5.500M9.500 5V10H13" /></S></MainButton>
          <MainButton $w={46} aria-label="Search"><Magnifier s={19} /></MainButton>
          <Select id="layers" value="Layers" w={118} kind="main" label="Layers" />
          <Select id="layout" value="Layout" w={118} kind="main" label="Layout" />
        </Group>
      </Toolbar>
      <Body>
        <LeftSide>
          <Upper><HierarchyPanel /><ScenePanel /></Upper>
          <Project />
        </LeftSide>
        <InspectorPanel />
      </Body>
      <Status>
        <S s={20} stroke="none"><path d="M6 0H14L20 6V14L14 20H6L0 14V6Z" fill="#ff6e40" /><path d="M8.500 3.500H11.500L11 12H9ZM8.800 13.500H11.200V16H8.800Z" fill="#191919" /></S>
        <span>Assets\Scripts\GameManager.cs(51,44): error CS0103: The name 'cells' does not exist in the current context</span>
        <StatusIcons>
          <Plain aria-label="Debugger"><S s={20} stroke="#c4c4c4" strokeWidth={2}><path d="M5 6H15V15L10 19L5 15Z" fill="#c4c4c4" /><path d="M1 3L5 7M0 11H4M1 18L5 15M15 11H19M10 2V6M3 1L19 19" /></S></Plain>
          <Plain aria-label="Cache"><S s={20} stroke="none" fill="#c4c4c4"><path d="M2 2H17V6H2ZM1 8Q9 13 18 8V12Q9 16 1 12ZM1 14Q9 19 17 14V17Q9 22 1 17Z" /><path d="M2 1L19 19" stroke="#c4c4c4" strokeWidth="2" /></S></Plain>
          <Plain aria-label="Lighting"><S s={20} stroke="#c4c4c4" strokeWidth={2}><path d="M6 2Q14 -1 18 6M18 12Q16 18 8 18.500Q1 17 1 9M1 1L19 19" /><circle cx="10" cy="9" r="3.500" fill="#c4c4c4" /></S></Plain>
          <Plain aria-label="Progress"><S s={21} stroke="#c4c4c4"><circle cx="10.500" cy="10.500" r="9.500" /><path d="M6 10.500L9.500 14L15 7" strokeWidth="2" /></S></Plain>
        </StatusIcons>
        <Watermark>CSDN @minosisterry</Watermark>
      </Status>
    </Shell>
  );
}
